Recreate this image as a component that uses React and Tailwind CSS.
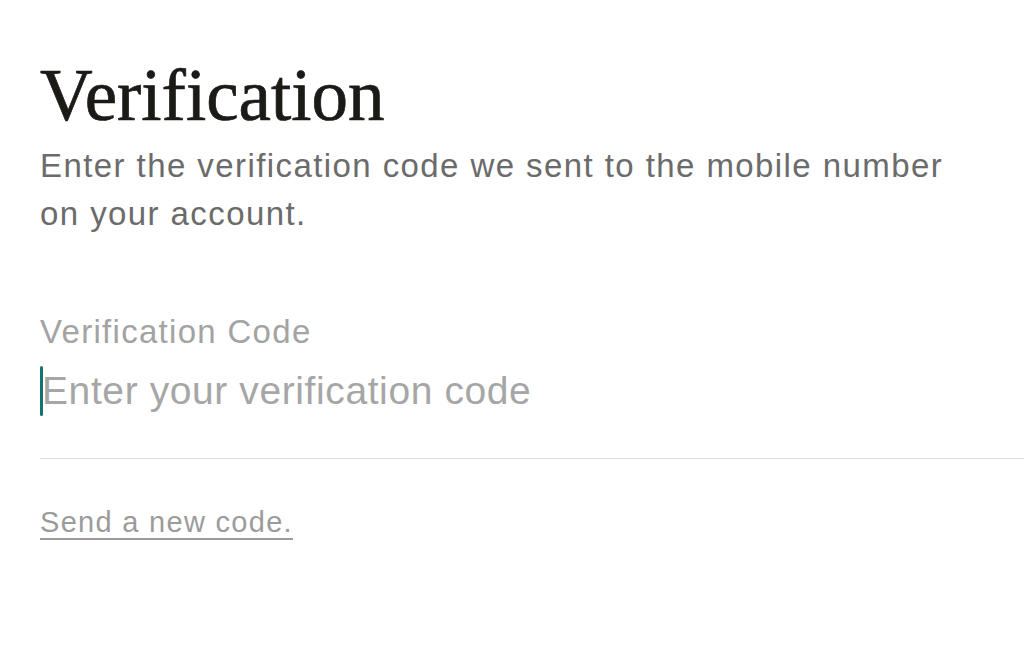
export default function App() {
  return (
    <div className="min-h-[654px] w-full bg-white pl-10 pt-[60px]" style={{ fontFamily: '"Liberation Sans", Arial, sans-serif' }}>
      <h1
        className="text-[73px] leading-[72px] text-[#1c1a17] [-webkit-text-stroke:0.7px_#1c1a17]"
        style={{ fontFamily: '"Liberation Serif", "Times New Roman", serif' }}
      >
        Verification
      </h1>
      <p className="mt-[10px] max-w-[930px] text-[33px] leading-[48px] tracking-[1.42px] text-[#6b6b6b]">
        Enter the verification code we sent to the mobile number on your account.
      </p>

      <div className="mt-[74px]">
        <div className="text-[33px] leading-[40px] tracking-[1.3px] text-[#a3a3a3]">Verification Code</div>
        <div className="mt-[14px] flex items-center border-b border-[#dcdcdc] pb-[42px]">
          <span className="h-[50px] w-[3px] rounded-full bg-[#137373]" />
          <span className="-ml-[1px] text-[39px] leading-[50px] tracking-[0.6px] text-[#a6a6a6]">Enter your verification code</span>
        </div>
      </div>

      <a href="#" className="mt-[46px] inline-block text-[29px] leading-[34px] tracking-[1.3px] text-[#9b9b9b] underline decoration-[2px] underline-offset-[6px]">
        Send a new code.
      </a>
    </div>
  );
}
